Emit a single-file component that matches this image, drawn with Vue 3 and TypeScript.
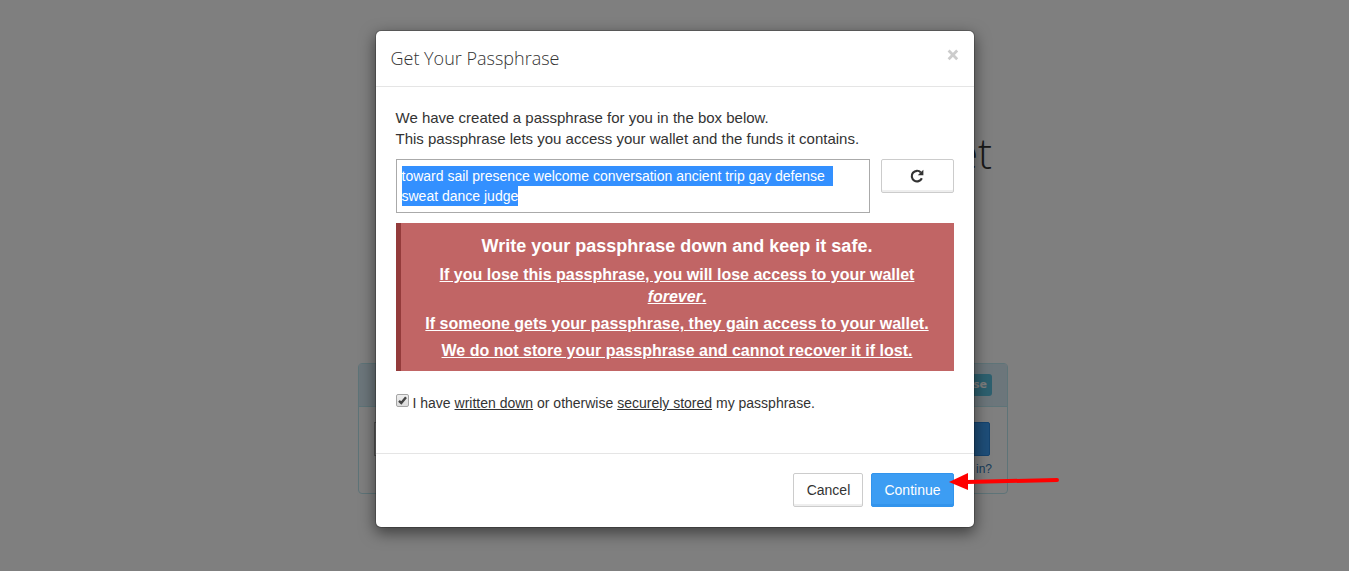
<script setup lang="ts">
import { onMounted, ref } from 'vue'

const phrase = ref('toward sail presence welcome conversation ancient trip gay defense sweat dance judge')
const confirmed = ref(true)
const box = ref<HTMLTextAreaElement | null>(null)

const warnings: { text: string; strong?: string }[] = [
  { text: 'If you lose this passphrase, you will lose access to your wallet ', strong: 'forever' },
  { text: 'If someone gets your passphrase, they gain access to your wallet.' },
  { text: 'We do not store your passphrase and cannot recover it if lost.' },
]

function selectPhrase() {
  box.value?.focus()
  box.value?.select()
}

onMounted(selectPhrase)
</script>

<template>
  <div class="screen">
    <main class="page" aria-hidden="true">
      <h1 class="page-title">Wallet</h1>
      <section class="panel">
        <header class="panel-head">
          <span class="panel-name">Log In</span>
          <span class="badge">Passphrase</span>
        </header>
        <div class="panel-body">
          <div class="login-row">
            <input class="login-input" type="password" aria-label="Passphrase" tabindex="-1" />
            <button class="login-btn" type="button" tabindex="-1">Log In</button>
          </div>
          <a class="help" href="#" tabindex="-1">Trouble logging in?</a>
        </div>
      </section>
    </main>

    <div class="backdrop">
      <div class="dialog" role="dialog" aria-modal="true" aria-labelledby="dialog-title">
        <header class="dialog-head">
          <h2 id="dialog-title">Get Your Passphrase</h2>
          <button class="close" type="button" aria-label="Close">
            <svg width="12" height="12" viewBox="0 0 12 12">
              <path d="M1.6 1.6 10.2 10.2M10.2 1.6 1.6 10.2" stroke="#ccc" stroke-width="2.8" />
            </svg>
          </button>
        </header>

        <div class="dialog-body">
          <label class="intro" for="phrase">
            We have created a passphrase for you in the box below.<br />
            This passphrase lets you access your wallet and the funds it contains.
          </label>
          <div class="phrase-row">
            <textarea id="phrase" ref="box" v-model="phrase" class="phrase" rows="2" readonly spellcheck="false"></textarea>
            <button class="btn refresh" type="button" aria-label="Generate another" @click="selectPhrase">
              <svg width="14" height="14" viewBox="0 0 13 13">
                <path d="M11 8.6A4.9 4.9 0 1 1 10.1 3.2" fill="none" stroke="#333" stroke-width="2" />
                <path d="M12.4 0.8V5.8H7.2Z" fill="#333" />
              </svg>
            </button>
          </div>

          <div class="warning">
            <h3>Write your passphrase down and keep it safe.</h3>
            <p v-for="w in warnings" :key="w.text">{{ w.text }}<template v-if="w.strong"><em>{{ w.strong }}</em>.</template></p>
          </div>

          <div class="confirm">
            <input id="confirm" v-model="confirmed" type="checkbox" />
            <label for="confirm">I have <u>written down</u> or otherwise <u>securely stored</u> my passphrase.</label>
          </div>
        </div>

        <footer class="dialog-foot">
          <button class="btn" type="button">Cancel</button>
          <button class="btn primary" type="button">Continue</button>
          <svg class="arrow" width="112" height="20" viewBox="0 0 112 20" aria-hidden="true">
            <path d="M18 10 108 8" stroke="#f00" stroke-width="4" stroke-linecap="round" />
            <path d="M0 10 19 1V18Z" fill="#f00" />
          </svg>
        </footer>
      </div>
    </div>
  </div>
</template>

<style>
body {
  background: #fff;
}
</style>

<style scoped>
* {
  box-sizing: border-box;
}

.screen {
  position: relative;
  min-height: 100vh;
  overflow: hidden;
  font: 14px/20px "Liberation Sans", Arial, sans-serif;
  color: #333;
}

/* page under the dialog */
.page {
  display: flex;
  flex-direction: column;
  align-items: center;
  padding: 123px 0 0 17px;
}

.page-title {
  width: 618px;
  margin: 0 0 180px;
  font: 300 42px/60px "Open Sans", sans-serif;
  text-align: right;
}

.panel {
  width: 650px;
  border: 1px solid #bce8f1;
  border-radius: 4px;
}

.panel-head {
  display: flex;
  justify-content: space-between;
  align-items: center;
  padding: 10px 15px 10px 16px;
  border-bottom: 1px solid #bce8f1;
  background: #d9edf7;
}

.panel-name {
  color: #a0522d;
}

.badge {
  padding: 1px 5px;
  border-radius: 3px;
  background: #5bc0de;
  color: #fff;
  font: 700 11px/20px "DejaVu Sans", sans-serif;
}

.panel-body {
  display: flex;
  flex-direction: column;
  align-items: flex-end;
  gap: 3px;
  padding: 15px 15px 14px;
}

.login-row {
  display: flex;
  align-self: stretch;
  padding-right: 2px;
}

.login-input {
  flex: 1;
  height: 34px;
  border: 1px solid #aaa;
  background: #fff;
}

.login-btn {
  width: 80px;
  border: 1px solid #2a86dc;
  border-radius: 2px;
  background: #3c9df3;
  color: #fff;
}

.help {
  color: #337ab7;
  font-size: 12px;
  text-decoration: none;
}

/* dialog */
.backdrop {
  position: absolute;
  inset: 0;
  padding: 30px 10px;
  background: rgba(0, 0, 0, 0.5);
}

.dialog {
  max-width: 600px;
  margin: 0 auto;
  border: 1px solid rgba(0, 0, 0, 0.2);
  border-radius: 6px;
  background: #fff;
  background-clip: padding-box;
  box-shadow: 0 5px 15px rgba(0, 0, 0, 0.5);
}

.dialog-head {
  display: flex;
  justify-content: space-between;
  align-items: flex-start;
  padding: 15px;
  border-bottom: 1px solid #e5e5e5;
}

.dialog-head h2 {
  margin: 0;
  font: 300 18px/25px "Open Sans", sans-serif;
}

.close {
  display: flex;
  margin-top: 3px;
  padding: 0;
  border: 0;
  background: none;
}

.dialog-body {
  padding: 20px 20px 40px;
}

.intro {
  display: block;
  margin-bottom: 10px;
  font-size: 15px;
  line-height: 21px;
}

.phrase-row {
  display: flex;
  align-items: flex-start;
  gap: 11px;
}

.phrase {
  flex: 1;
  height: 54px;
  padding: 6px 5px;
  border: 1px solid #aaa;
  outline: 0;
  background: #fff;
  color: #333;
  font: inherit;
  resize: none;
  overflow: hidden;
}

.phrase::selection {
  background: #3390ff;
  color: #fff;
}

.btn {
  min-width: 70px;
  height: 34px;
  padding: 0 12px;
  border: 1px solid #ccc;
  border-radius: 2px;
  background: #fff;
  box-shadow: inset 0 -2px 0 #eee;
  color: #333;
  font: inherit;
}

.btn.primary {
  border-color: #3294ec;
  background: #3c9df3;
  box-shadow: inset 0 -2px 0 #3294ec;
  color: #fff;
}

.refresh {
  display: flex;
  justify-content: center;
  align-items: center;
  width: 73px;
}

.warning {
  margin: 10px 0 22px;
  padding: 10px 20px 9px;
  border-left: 5px solid #943b3b;
  background: #c16565;
  color: #fff;
  text-align: center;
}

.warning h3 {
  margin: 0;
  font-size: 18px;
  line-height: 26px;
}

.warning p {
  margin: 5px 0 0;
  font-size: 16px;
  font-weight: 700;
  line-height: 22px;
  text-decoration: underline;
}

.confirm {
  display: flex;
  align-items: flex-start;
  gap: 4px;
}

.confirm input {
  appearance: none;
  width: 13px;
  height: 13px;
  margin: 1px 0 0;
  border: 1px solid #a5a5a5;
  border-radius: 2px;
  background: linear-gradient(#eee, #dcdcdc);
}

.confirm input:checked {
  background: url("data:image/svg+xml,%3Csvg xmlns='http://www.w3.org/2000/svg' viewBox='0 0 11 11'%3E%3Cpath d='M2 5.8 4.3 8 9 2.2' fill='none' stroke='%23444' stroke-width='2.4'/%3E%3C/svg%3E"), linear-gradient(#eee, #dcdcdc);
}

.dialog-foot {
  position: relative;
  display: flex;
  justify-content: flex-end;
  gap: 8px;
  padding: 19px 20px 20px;
  border-top: 1px solid #e5e5e5;
}

.arrow {
  position: absolute;
  top: 18px;
  right: -87px;
}
</style>
